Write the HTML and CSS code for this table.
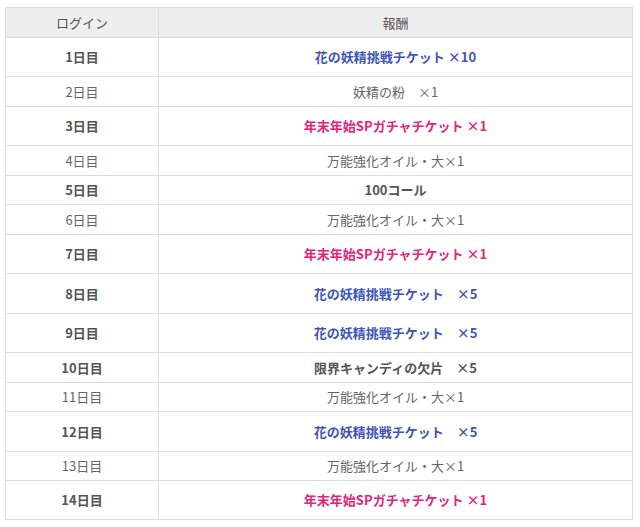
FILE: index.html
```html
<!DOCTYPE html>
<html lang="ja">
<head>
<meta charset="utf-8">
<link rel="stylesheet" href="styles.css">
</head>
<body>
<table class="rewards">
  <thead>
    <tr><th class="day">ログイン</th><th>報酬</th></tr>
  </thead>
  <tbody>
    <tr class="tall"><td class="b">1日目</td><td class="b blue">花の妖精挑戦チケット ×10</td></tr>
    <tr><td>2日目</td><td>妖精の粉　×1</td></tr>
    <tr class="tall"><td class="b">3日目</td><td class="b pink">年末年始SPガチャチケット ×1</td></tr>
    <tr><td>4日目</td><td>万能強化オイル・大×1</td></tr>
    <tr class="short"><td class="b">5日目</td><td class="b">100コール</td></tr>
    <tr><td>6日目</td><td>万能強化オイル・大×1</td></tr>
    <tr class="tall"><td class="b">7日目</td><td class="b pink">年末年始SPガチャチケット ×1</td></tr>
    <tr class="tall2"><td class="b">8日目</td><td class="b blue">花の妖精挑戦チケット　×5</td></tr>
    <tr class="tall"><td class="b">9日目</td><td class="b blue">花の妖精挑戦チケット　×5</td></tr>
    <tr><td class="b">10日目</td><td class="b">限界キャンディの欠片　×5</td></tr>
    <tr class="short"><td>11日目</td><td>万能強化オイル・大×1</td></tr>
    <tr class="tall2"><td class="b">12日目</td><td class="b blue">花の妖精挑戦チケット　×5</td></tr>
    <tr class="short"><td>13日目</td><td>万能強化オイル・大×1</td></tr>
    <tr class="tall"><td class="b">14日目</td><td class="b pink">年末年始SPガチャチケット ×1</td></tr>
  </tbody>
</table>
</body>
</html>
```

FILE: styles.css
```css
html, body {
  margin: 0;
  padding: 0;
  background: #ffffff;
}
body {
  padding: 7px 0 0 5px;
  font-family: "Noto Sans CJK JP", "Noto Sans", sans-serif;
  font-size: 13px;
  color: #666666;
}
.rewards {
  border-collapse: collapse;
  width: 628px;
  table-layout: fixed;
}
.rewards th,
.rewards td {
  border: 1px solid #dddddd;
  text-align: center;
  vertical-align: middle;
  padding: 0;
  line-height: 18px;
}
.rewards th {
  background: #eeeeee;
  font-weight: normal;
  color: #555555;
  height: 29px;
}
.rewards th.day {
  width: 152px;
}
.rewards td {
  height: 29px;
}
.rewards tr.short td {
  height: 28px;
}
.rewards tr.tall td {
  height: 38px;
}
.rewards tr.tall2 td {
  height: 39px;
}
.rewards td.b {
  font-weight: bold;
  color: #555555;
}
.rewards td.blue {
  color: #3f55b8;
}
.rewards td.pink {
  color: #e4247a;
}
```
